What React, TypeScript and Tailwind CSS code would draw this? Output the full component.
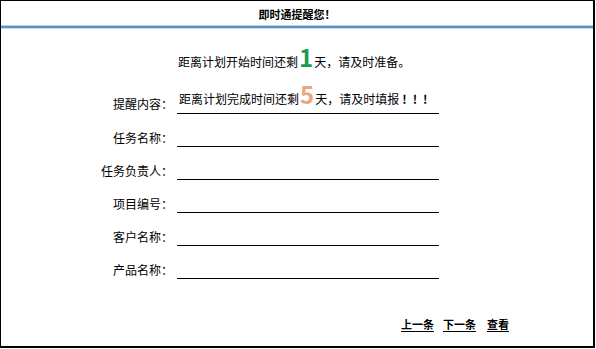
import React from "react";

const rows = ["任务名称", "任务负责人", "项目编号", "客户名称", "产品名称"];

export default function App() {
  return (
    <div
      className="w-[596px] h-[349px] bg-white text-black text-[12px]"
      style={{ fontFamily: '"Noto Sans CJK SC", "Noto Sans", sans-serif' }}
    >
      <div className="w-[595px] h-[348px] border-l border-t border-r-2 border-b-2 border-black flex flex-col">
        <div className="h-[24px] flex items-center justify-center font-bold text-[11px] leading-none pt-[2px]">
          即时通提醒您！
        </div>
        <div className="h-[1px] bg-[#b9d0ea]" />
        <div className="h-[2px] bg-[#5f91c9]" />
        <div className="h-[1px] bg-[#c9dbef]" />
        <div className="pl-[177px] mt-[16px] h-[26px] flex items-baseline leading-none whitespace-nowrap">
          <span>距离计划开始时间还剩</span>
          <span className="text-[24px] font-bold text-[#1a9c55] mx-[1px]">1</span>
          <span>天，请及时准备。</span>
        </div>
        <div className="flex flex-col mt-[4px]">
          <div className="flex items-end h-[39px]">
            <div className="w-[172px] text-right leading-[16px] pb-[2px]">提醒内容：</div>
            <div className="ml-[4px] w-[262px] border-b border-black flex items-baseline leading-none pb-[7px] pl-[2px] whitespace-nowrap">
              <span>距离计划完成时间还剩</span>
              <span className="text-[24px] font-bold text-[#eda77e] mx-[1px]">5</span>
              <span>天，请及时填报</span>
              <span className="font-bold ml-[3px] tracking-[6px]">!!!</span>
            </div>
          </div>
          {rows.map((r) => (
            <div key={r} className="flex items-end h-[33px]">
              <div className="w-[172px] text-right leading-[16px] pb-[1px]">{r}：</div>
              <div className="ml-[4px] w-[262px] h-[16px] border-b border-black" />
            </div>
          ))}
        </div>
        <div className="flex justify-end pr-[84px] mt-[40px] font-bold text-[11px] leading-none whitespace-nowrap">
          <span className="underline underline-offset-2">上一条</span>
          <span className="underline underline-offset-2 ml-[9px]">下一条</span>
          <span className="underline underline-offset-2 ml-[11px]">查看</span>
        </div>
      </div>
    </div>
  );
}
